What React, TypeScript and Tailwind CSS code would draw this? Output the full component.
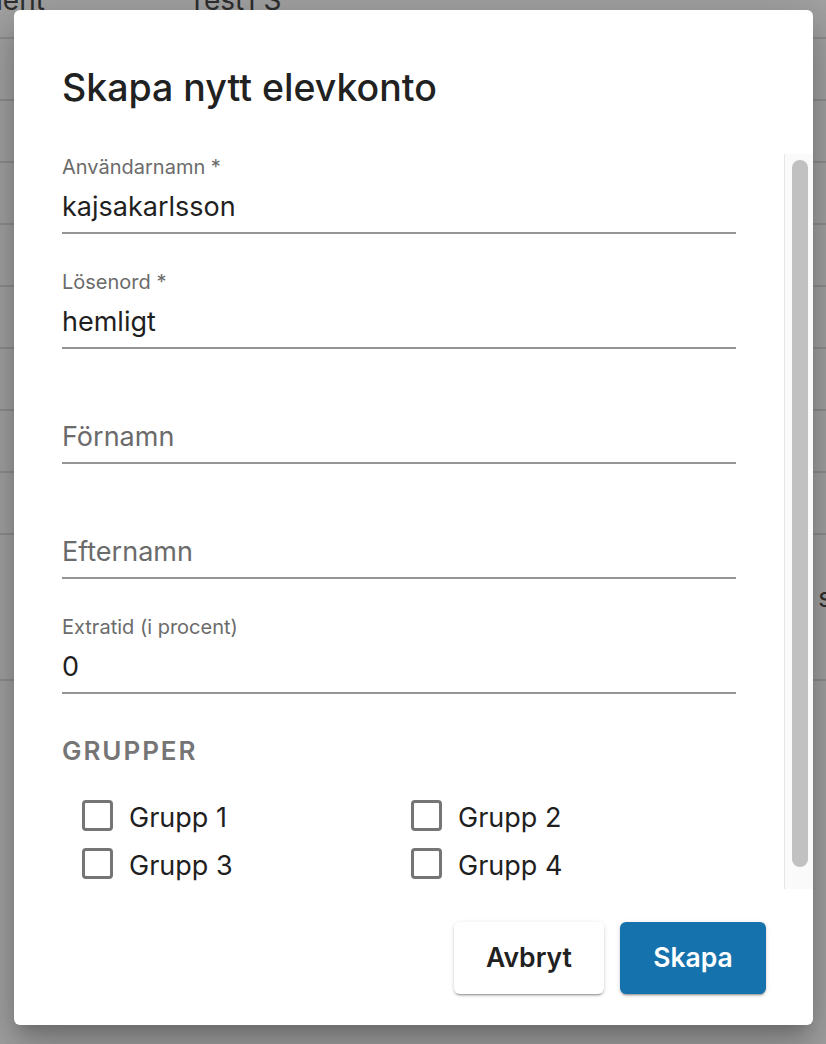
import React from "react";

const rows = [0, 1, 2, 3, 4, 5, 6, 7, 8];

function Field({ label, value, shrink }: { label: string; value?: string; shrink: boolean }) {
  return (
    <div className="flex flex-col h-[80px]">
      <div className="h-[26px] flex items-center text-[20px] leading-none text-[#6b6b6b]">
        {shrink ? label : ""}
      </div>
      <div
        className={
          "h-[52px] flex items-center text-[27px] leading-none " +
          (shrink ? "text-[#1f1f1f]" : "text-[#6b6b6b]")
        }
      >
        {shrink ? value : label}
      </div>
      <div className="h-[2px] bg-[#959595]" />
    </div>
  );
}

function Check({ label }: { label: string }) {
  return (
    <div className="h-[48px] flex items-center pl-[20px] gap-[16px]">
      <div className="w-[31px] h-[31px] rounded-[4px] border-[3px] border-[#757575] shrink-0" />
      <span className="text-[27px] leading-none text-[#1f1f1f] mt-[4px]">{label}</span>
    </div>
  );
}

export default function App() {
  return (
    <div className="relative w-[826px] h-[1044px] overflow-hidden bg-[#a2a2a2] font-['Inter',sans-serif]">
      {/* underlying page table */}
      <div className="flex flex-col mt-[-23px]">
        <div className="h-[62px] border-b-2 border-[#8e8e8e] flex items-end pb-[23px] text-[28px] text-[#2e2e2e] leading-none">
          <span className="ml-[-58px] w-[246px]">Student</span>
          <span>Test1 S</span>
        </div>
        {rows.slice(1).map((r) => (
          <div key={r} className="h-[62px] border-b-2 border-[#8e8e8e]" />
        ))}
        <div className="h-[146px] border-b-2 border-[#8e8e8e] flex items-start justify-end pt-[50px]">
          <span className="text-[26px] leading-none text-[#2e2e2e] mr-[-6px]">s</span>
        </div>
      </div>

      {/* dialog */}
      <div className="absolute left-[14px] top-[10px] w-[799px] h-[1015px] bg-white rounded-[6px] flex flex-col shadow-[0_11px_15px_-7px_rgba(0,0,0,0.2),0_24px_38px_3px_rgba(0,0,0,0.14),0_9px_46px_8px_rgba(0,0,0,0.12)]">
        <div className="h-[144px] pl-[48px] pt-[56px]">
          <h2 className="text-[37.5px] leading-[44px] font-medium text-[#212121]">Skapa nytt elevkonto</h2>
        </div>
        <div className="h-[735px] flex overflow-hidden">
          <div className="flex-1 px-[48px] flex flex-col">
            <div className="flex flex-col gap-[35px]">
              <Field label="Användarnamn *" value="kajsakarlsson" shrink />
              <Field label="Lösenord *" value="hemligt" shrink />
              <Field label="Förnamn" shrink={false} />
              <Field label="Efternamn" shrink={false} />
              <Field label="Extratid (i procent)" value="0" shrink />
            </div>
            <div className="mt-[40px] h-[32px] flex items-center text-[26px] font-semibold tracking-[0.075em] text-[#757575] uppercase">
              Grupper
            </div>
            <div className="mt-[25px] grid grid-cols-[329px_1fr]">
              <Check label="Grupp 1" />
              <Check label="Grupp 2" />
              <Check label="Grupp 3" />
              <Check label="Grupp 4" />
            </div>
          </div>
          <div className="w-[29px] h-full bg-[#fafafa] border-l border-[#e6e6e6] pt-[6px] pl-[7px]">
            <div className="w-[16px] h-[707px] rounded-full bg-[#c1c1c1]" />
          </div>
        </div>
        <div className="flex-1 flex justify-end items-start pt-[33px] pr-[47px] gap-[16px]">
          <button className="w-[150px] h-[72px] rounded-[6px] bg-white text-[26.5px] font-semibold text-[#212121] shadow-[0_3px_1px_-2px_rgba(0,0,0,0.2),0_2px_2px_0_rgba(0,0,0,0.14),0_1px_5px_0_rgba(0,0,0,0.12)]">
            Avbryt
          </button>
          <button className="w-[146px] h-[72px] rounded-[6px] bg-[#1672ac] text-[26.5px] font-semibold text-white shadow-[0_3px_1px_-2px_rgba(0,0,0,0.2),0_2px_2px_0_rgba(0,0,0,0.14),0_1px_5px_0_rgba(0,0,0,0.12)]">
            Skapa
          </button>
        </div>
      </div>
    </div>
  );
}
